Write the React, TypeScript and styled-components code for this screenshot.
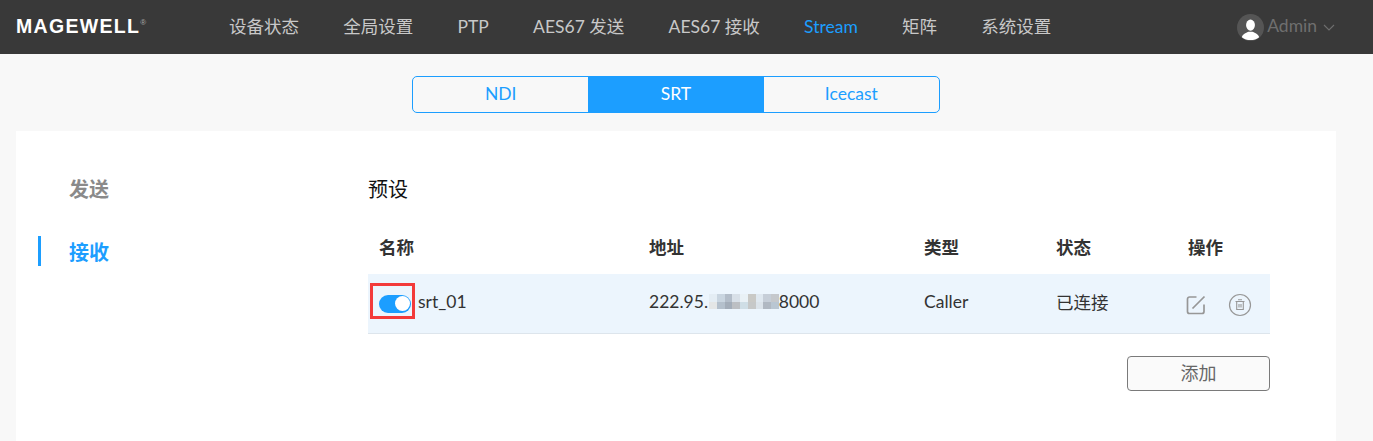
import React from "react";
import styled, { createGlobalStyle } from "styled-components";

const GlobalStyle = createGlobalStyle`
  html, body {
    margin: 0;
    padding: 0;
    height: 100%;
    overflow: hidden;
    background: #f8f8f8;
  }
  body {
    font-family: Lato, "Noto Sans CJK SC", sans-serif;
    color: #333;
  }
`;

const navItems = ["设备状态", "全局设置", "PTP", "AES67 发送", "AES67 接收", "Stream", "矩阵", "系统设置"];
const tabs = ["NDI", "SRT", "Icecast"];
const blue = "#1c9eff";

// blurred part of the address
const mosaicColors = [
  ["#e4edf4", "#c9d5e0", "#b3bdc9", "#d8e0e8", "#e9f1f6", "#c9c9c6", "#dfe8f0", "#c6ced8", "#c5c8cc"],
  ["#e4e6e6", "#b4c0cc", "#a3adb9", "#bcbfc3", "#cfdee6", "#c6c8c8", "#dbe3ea", "#b0b8c2", "#b9c6d2"],
];

const App = () => {
  return (
    <Page>
      <GlobalStyle />
      <Header>
        <Logo>
          MAGEWELL<sup>®</sup>
        </Logo>
        <Nav>
          {navItems.map((item) => (
            <NavItem key={item} $active={item === "Stream"}>
              {item}
            </NavItem>
          ))}
        </Nav>
        <User>
          <Avatar viewBox="0 0 28 28">
            <circle cx="14" cy="14" r="14" fill="#555" />
            <ellipse cx="14" cy="11.5" rx="4.6" ry="5.8" fill="#fff" />
            <path d="M5 24c1-3.500 5-4.500 7-5.500h4c2 1 6 2 7 5.500-2.500 2-5.500 3-9 3s-6.500-1-9-3z" fill="#fff" />
          </Avatar>
          <UserName>Admin</UserName>
          <Chevron viewBox="0 0 12 7">
            <path d="M1 1l5 5 5-5" fill="none" stroke="#6e6e6e" strokeWidth="1.1" />
          </Chevron>
        </User>
      </Header>

      <TabBar>
        <Tabs>
          {tabs.map((tab) => (
            <Tab key={tab} $active={tab === "SRT"}>
              {tab}
            </Tab>
          ))}
        </Tabs>
      </TabBar>

      <Card>
        <Side>
          <SideItem>发送</SideItem>
          <SideItem $active>接收</SideItem>
        </Side>
        <Main>
          <Title>预设</Title>
          <Table>
            <HeadRow>
              <Cell>名称</Cell>
              <Cell>地址</Cell>
              <Cell>类型</Cell>
              <Cell>状态</Cell>
              <Cell>操作</Cell>
            </HeadRow>
            <BodyRow>
              <Cell>
                <NameWrap>
                  <Toggle />
                  <Highlight />
                  <RowText>srt_01</RowText>
                </NameWrap>
              </Cell>
              <Cell>
                <RowText>222.95.</RowText>
                <Mosaic>
                  {mosaicColors.flat().map((color, i) => (
                    <i key={i} style={{ background: color }} />
                  ))}
                </Mosaic>
                <RowText>8000</RowText>
              </Cell>
              <Cell>
                <RowText>Caller</RowText>
              </Cell>
              <Cell>
                <RowText>已连接</RowText>
              </Cell>
              <Cell>
                <Actions>
                  <EditIcon viewBox="0 0 20 20" width="20" height="20">
                    <path d="M10.500 2H3.500a2 2 0 0 0-2 2v12.500a2 2 0 0 0 2 2H16a2 2 0 0 0 2-2V9.500" />
                    <path d="M6.500 13.500L18.500 1.500" />
                  </EditIcon>
                  <ActionIcon viewBox="0 0 24 24" width="24" height="24">
                    <circle cx="12" cy="12" r="10.500" strokeWidth="1.200" />
                    <path d="M7.500 8.500h9M10 6.800h4M8.700 8.500v8h6.600v-8M11 11v3.500M13 11v3.500" strokeWidth="1.100" />
                  </ActionIcon>
                </Actions>
              </Cell>
            </BodyRow>
          </Table>
          <Footer>
            <AddButton>添加</AddButton>
          </Footer>
        </Main>
      </Card>
    </Page>
  );
};

export default App;

const Page = styled.div`
  height: 441px;
  overflow: hidden;
  background: #f8f8f8;
`;

const Header = styled.header`
  display: flex;
  align-items: center;
  height: 54px;
  padding: 0 38px 3px 16px;
  box-sizing: border-box;
  background: #393939;
`;

const Logo = styled.div`
  width: 213px;
  margin-top: 2px;
  font-family: "Liberation Sans", sans-serif;
  font-size: 19.500px;
  font-weight: 700;
  letter-spacing: 1.300px;
  color: #fff;
  sup {
    font-size: 8px;
    font-weight: 400;
    letter-spacing: 0;
    color: #aaa;
    vertical-align: 8px;
    line-height: 0;
  }
`;

const Nav = styled.nav`
  display: flex;
  align-items: baseline;
  gap: 44.250px;
  flex: 1;
`;

const NavItem = styled.span<{ $active?: boolean }>`
  font-size: 17.500px;
  color: ${(p) => (p.$active ? blue : "#c8c8c8")};
`;

const User = styled.div`
  display: flex;
  align-items: center;
  gap: 3px;
`;

const Avatar = styled.svg`
  width: 27px;
  height: 27px;
  margin-top: 4px;
`;

const UserName = styled.span`
  font-size: 17.500px;
  color: #6f6f6f;
`;

const Chevron = styled.svg`
  width: 12px;
  height: 7px;
  margin: 3px 0 0 3px;
`;

const TabBar = styled.div`
  display: flex;
  justify-content: center;
  padding: 22px 21px 18px 0;
`;

const Tabs = styled.div`
  display: flex;
  width: 528px;
  height: 37px;
  box-sizing: border-box;
  border: 1px solid ${blue};
  border-radius: 5px;
  overflow: hidden;
`;

const Tab = styled.div<{ $active?: boolean }>`
  flex: 1;
  display: flex;
  align-items: center;
  justify-content: center;
  padding-bottom: 2px;
  font-size: 17.500px;
  color: ${(p) => (p.$active ? "#fff" : blue)};
  background: ${(p) => (p.$active ? blue : "transparent")};
`;

const Card = styled.section`
  display: flex;
  width: 1320px;
  height: 310px;
  margin-left: 16px;
  background: #fff;
`;

const Side = styled.aside`
  width: 352px;
  padding: 42px 0 0 22px;
  box-sizing: border-box;
`;

const SideItem = styled.div<{ $active?: boolean }>`
  height: 30px;
  line-height: 32px;
  margin-bottom: 33px;
  padding-left: ${(p) => (p.$active ? "28px" : "31px")};
  border-left: ${(p) => (p.$active ? `3px solid ${blue}` : "none")};
  font-size: 20px;
  font-weight: 700;
  color: ${(p) => (p.$active ? blue : "#8a8a8a")};
`;

const Main = styled.div`
  width: 902px;
  padding-top: 44px;
`;

const Title = styled.div`
  height: 28px;
  line-height: 28px;
  font-size: 20px;
  color: #111;
`;

const Table = styled.div`
  margin-top: 18px;
`;

const columns = "grid-template-columns: 281px 275px 132px 132px 82px;";

const HeadRow = styled.div`
  display: grid;
  ${columns}
  height: 53px;
  box-sizing: border-box;
  padding-bottom: 2px;
  align-items: center;
  font-size: 17.500px;
  font-weight: 700;
  color: #333;
  & > div:first-child {
    padding-left: 11px;
  }
`;

const BodyRow = styled.div`
  display: grid;
  ${columns}
  height: 60px;
  box-sizing: border-box;
  align-items: center;
  background: #ecf5fd;
  border-bottom: 1px solid #dde5ec;
  font-size: 17.500px;
  color: #333;
  & > div:first-child {
    padding-left: 11px;
  }
`;

const Cell = styled.div`
  display: flex;
  align-items: center;
  white-space: pre;
`;

const RowText = styled.span`
  margin-bottom: 5px;
`;

const NameWrap = styled.div`
  position: relative;
  display: flex;
  align-items: center;
  gap: 7px;
`;

const Toggle = styled.span`
  position: relative;
  display: block;
  width: 32px;
  height: 18px;
  border-radius: 9px;
  background: ${blue};
  &::after {
    content: "";
    position: absolute;
    top: 1.500px;
    right: 1.500px;
    width: 15px;
    height: 15px;
    border-radius: 50%;
    background: #fff;
  }
`;

const Highlight = styled.span`
  position: absolute;
  left: -9px;
  top: -8px;
  width: 45px;
  height: 36px;
  box-sizing: border-box;
  border: 3px solid #f33a3a;
`;

const Mosaic = styled.span`
  display: inline-grid;
  grid-template-columns: repeat(9, 7.750px);
  grid-auto-rows: 7.500px;
  margin: 0 0 4px 1px;
  i {
    display: block;
  }
`;

const Actions = styled.div`
  display: flex;
  align-items: center;
  gap: 20px;
  margin-top: 2px;
`;

const ActionIcon = styled.svg`
  fill: none;
  stroke: #979797;
  stroke-width: 1.700;
`;

const EditIcon = styled(ActionIcon)`
  margin: 0 2px 0 -2px;
`;

const Footer = styled.div`
  display: flex;
  justify-content: flex-end;
  margin-top: 22px;
`;

const AddButton = styled.button`
  width: 143px;
  height: 35px;
  padding: 0 0 3px;
  border: 1px solid #7a7a7a;
  border-radius: 4px;
  background: #fafafa;
  font-family: inherit;
  font-size: 18px;
  color: #666;
`;
